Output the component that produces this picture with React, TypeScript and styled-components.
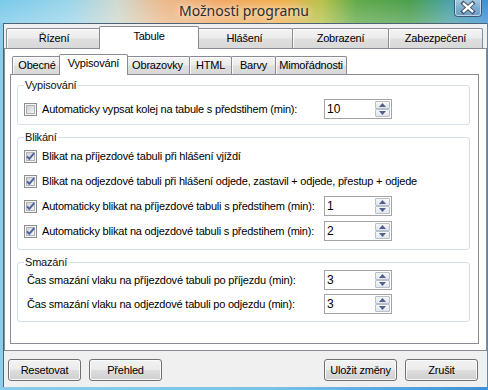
import React from 'react';
import styled, { createGlobalStyle, css } from 'styled-components';

const Global = createGlobalStyle`
  html, body { margin: 0; padding: 0; }
  body {
    width: 488px; height: 390px; overflow: hidden;
    font-family: "Liberation Sans", Arial, sans-serif;
  }
  * { box-sizing: border-box; }
`;

const Window = styled.div`
  width: 488px;
  height: 390px;
  display: flex;
  flex-direction: column;
  background: linear-gradient(to right, #8ccdea 0%, #7cc2e6 55%, #3f8fd6 100%);
`;

const TitleBar = styled.div`
  position: relative;
  flex: none;
  height: 23px;
  display: flex;
  align-items: center;
  justify-content: center;
  background:
    linear-gradient(to bottom, rgba(255,255,255,0) 0%, rgba(255,255,255,0.22) 100%),
    linear-gradient(to right, #79c9ea 0%, #9ad5ea 14%, #cfd9cf 24%, #ebbb8e 33%, #f1a963 45%, #f1b04e 58%, #b7c24c 66%, #62aa4a 73%, #4c9f4e 84%, #4aa2a6 92%, #3c8fd8 100%);
`;

const Title = styled.span`
  font-family: "Noto Sans", "Open Sans", sans-serif;
  font-size: 14px;
  line-height: 18px;
  margin-top: -1px;
  color: #2e2e2e;
  text-shadow: 0 0 6px rgba(255,255,255,0.85), 0 0 12px rgba(255,255,255,0.6);
`;

const CloseBox = styled.svg`
  position: absolute;
  top: 0;
  right: 6px;
`;

const Frame = styled.div`
  flex: 1;
  display: flex;
  padding: 0 1px 3px 3px;
`;

const Client = styled.div`
  flex: 1;
  display: flex;
  flex-direction: column;
  background: #f0f0f0;
  border-left: 1px solid #4e6378;
  border-top: 1px solid #4e6378;
`;

const TabStrip = styled.div<{ $h: number; $mt: number }>`
  position: relative;
  z-index: 1;
  display: flex;
  align-items: flex-end;
  height: ${p => p.$h}px;
  margin-top: ${p => p.$mt}px;
  padding-left: 2px;
  flex: none;
`;

const Tab = styled.div<{ $w: number; $h: number; $active?: boolean }>`
  width: ${p => (p.$active ? p.$w + 4 : p.$w)}px;
  height: ${p => (p.$active ? p.$h + 3 : p.$h)}px;
  margin-left: -1px;
  &:first-child { margin-left: 0; }
  border: 1px solid #898c95;
  border-bottom: none;
  border-radius: 2px 2px 0 0;
  display: flex;
  align-items: center;
  justify-content: center;
  font-size: 11px;
  letter-spacing: -0.2px;
  line-height: 13px;
  color: #000;
  white-space: nowrap;
  ${p =>
    p.$active
      ? css`
          margin-left: -3px;
          margin-right: -2px;
          margin-bottom: -1px;
          padding-bottom: 3px;
          z-index: 2;
          background: #fff;
        `
      : css`
          background: linear-gradient(#f4f4f4 0%, #ececec 45%, #dfdfdf 55%, #d8d8d8 100%);
          box-shadow: inset 1px 1px 0 rgba(255,255,255,0.8);
        `}
`;

const Panel = styled.div<{ $pad: string }>`
  flex: 1;
  display: flex;
  flex-direction: column;
  background: #fff;
  border: 1px solid #898c95;
  padding: ${p => p.$pad};
`;

const Group = styled.fieldset<{ $pt: number; $pb: number; $gap: number }>`
  margin: 0;
  min-inline-size: auto;
  border: 1px solid #d5dfe5;
  border-radius: 3px;
  padding: ${p => p.$pt}px 8px ${p => p.$pb}px 6px;
  display: flex;
  flex-direction: column;
  gap: ${p => p.$gap}px;
  & + & { margin-top: 6px; }
`;

const Legend = styled.legend`
  padding: 0 1px;
  font-size: 11px;
  line-height: 13px;
  letter-spacing: -0.2px;
  color: #111;
`;

const Row = styled.div`
  display: grid;
  grid-template-columns: 300px 68px;
  align-items: center;
  height: 20px;
`;

const CheckLine = styled.label`
  display: flex;
  align-items: center;
  gap: 5px;
  white-space: nowrap;
`;

const Text = styled.span<{ $indent?: number }>`
  font-size: 11px;
  line-height: 13px;
  letter-spacing: -0.2px;
  color: #000;
  white-space: nowrap;
  padding-left: ${p => p.$indent ?? 0}px;
`;

const CheckSvg = styled.svg`
  flex: none;
  display: block;
`;

const Spinner = styled.div`
  width: 68px;
  height: 20px;
  display: flex;
  align-items: stretch;
  border: 1px solid #a4a4a4;
  background: #fff;
  padding: 1px;
`;

const SpinValue = styled.span`
  flex: 1;
  font-size: 12px;
  line-height: 16px;
  padding-left: 1px;
  color: #000;
`;

const SpinButtons = styled.div`
  width: 15px;
  display: flex;
  flex-direction: column;
`;

const SpinBtn = styled.div`
  flex: 1;
  display: flex;
  align-items: center;
  justify-content: center;
  border: 1px solid #b8c0cb;
  border-radius: 1px;
  background: linear-gradient(#f6f7f8, #e2e5ea);
`;

const ButtonBar = styled.div`
  flex: none;
  height: 36px;
  display: flex;
  align-items: flex-start;
  padding: 8px 9px 0 4px;
`;

const ButtonGroup = styled.div`
  display: flex;
  gap: 8px;
  &:first-child { margin-right: auto; }
`;

const Button = styled.div`
  width: 73px;
  height: 22px;
  display: flex;
  align-items: center;
  justify-content: center;
  border: 1px solid #707070;
  border-radius: 3px;
  background: linear-gradient(#f2f2f2 0%, #ebebeb 48%, #dddddd 52%, #cfcfcf 100%);
  box-shadow: inset 0 0 0 1px rgba(252,252,252,0.9);
  font-size: 11px;
  letter-spacing: -0.2px;
  color: #000;
`;

const Check = ({ checked }: { checked: boolean }) => (
  <CheckSvg width="13" height="13" viewBox="0 0 13 13">
    <defs>
      <linearGradient id="cbg" x1="0" y1="0" x2="1" y2="1">
        <stop offset="0" stopColor="#cbced3" />
        <stop offset="1" stopColor="#f7f7f7" />
      </linearGradient>
    </defs>
    <rect x="0.5" y="0.5" width="12" height="12" fill="#f4f4f4" stroke="#8e8f8f" />
    <rect x="2.5" y="2.5" width="8" height="8" fill="url(#cbg)" stroke="#b0b4b9" />
    {checked && (
      <path d="M3 6.3 L5.3 8.9 L10.2 3.1" fill="none" stroke="#4b5f9f" strokeWidth="1.9" />
    )}
  </CheckSvg>
);

const Arrow = ({ up }: { up?: boolean }) => (
  <svg width="7" height="4" viewBox="0 0 7 4" style={{ display: 'block' }}>
    <path d={up ? 'M0 4 L3.5 0 L7 4Z' : 'M0 0 L7 0 L3.5 4Z'} fill="#4d6090" />
  </svg>
);

const NumBox = ({ value }: { value: string }) => (
  <Spinner>
    <SpinValue>{value}</SpinValue>
    <SpinButtons>
      <SpinBtn><Arrow up /></SpinBtn>
      <SpinBtn><Arrow /></SpinBtn>
    </SpinButtons>
  </Spinner>
);

const outerTabs = [
  { label: 'Řízení', w: 96 },
  { label: 'Tabule', w: 96, active: true },
  { label: 'Hlášení', w: 97 },
  { label: 'Zobrazení', w: 97 },
  { label: 'Zabezpečení', w: 95 },
];

const innerTabs = [
  { label: 'Obecné', w: 50 },
  { label: 'Vypisování', w: 65, active: true },
  { label: 'Obrazovky', w: 65 },
  { label: 'HTML', w: 43 },
  { label: 'Barvy', w: 45 },
  { label: 'Mimořádnosti', w: 72 },
];

export default function App() {
  return (
    <>
      <Global />
      <Window>
        <TitleBar>
          <Title>Možnosti programu</Title>
          <CloseBox width="28" height="17" viewBox="0 0 28 17">
            <defs>
              <linearGradient id="cls" x1="0" y1="0" x2="0" y2="1">
                <stop offset="0" stopColor="#c4d8ec" stopOpacity="0.75" />
                <stop offset="0.5" stopColor="#8eb0d2" stopOpacity="0.7" />
                <stop offset="1" stopColor="#6f98c4" stopOpacity="0.8" />
              </linearGradient>
            </defs>
            <path d="M0.5 0 V13.5 Q0.5 16.5 3.5 16.5 H24.5 Q27.5 16.5 27.5 13.5 V0" fill="url(#cls)" stroke="#3d5877" />
            <path d="M1.5 0 V13.3 Q1.5 15.5 3.7 15.5 H24.3 Q26.5 15.5 26.5 13.3 V0" fill="none" stroke="rgba(255,255,255,0.55)" />
            <path d="M9.5 3.5 L18.5 11.5 M18.5 3.5 L9.5 11.5" stroke="#3b4a5c" strokeWidth="4.2" strokeLinecap="square" />
            <path d="M9.8 3.8 L18.2 11.2 M18.2 3.8 L9.8 11.2" stroke="#ffffff" strokeWidth="2.4" strokeLinecap="square" />
          </CloseBox>
        </TitleBar>
        <Frame>
          <Client>
            <TabStrip $h={22} $mt={2}>
              {outerTabs.map(t => (
                <Tab key={t.label} $w={t.w} $h={20} $active={t.active}>{t.label}</Tab>
              ))}
            </TabStrip>
            <Panel $pad="5px 7px 6px 5px">
              <TabStrip $h={20} $mt={0}>
                {innerTabs.map(t => (
                  <Tab key={t.label} $w={t.w} $h={18} $active={t.active}>{t.label}</Tab>
                ))}
              </TabStrip>
              <Panel $pad="4px 8px 0 6px">
                <Group $pt={7} $pb={5} $gap={0}>
                  <Legend>Vypisování</Legend>
                  <Row>
                    <CheckLine>
                      <Check checked={false} />
                      <Text>Automaticky vypsat kolej na tabule s předstihem (min):</Text>
                    </CheckLine>
                    <NumBox value="10" />
                  </Row>
                </Group>
                <Group $pt={2} $pb={8} $gap={5}>
                  <Legend>Blikání</Legend>
                  <Row>
                    <CheckLine>
                      <Check checked />
                      <Text>Blikat na příjezdové tabuli při hlášení vjíždí</Text>
                    </CheckLine>
                  </Row>
                  <Row>
                    <CheckLine>
                      <Check checked />
                      <Text>Blikat na odjezdové tabuli při hlášení odjede, zastavil + odjede, přestup + odjede</Text>
                    </CheckLine>
                  </Row>
                  <Row>
                    <CheckLine>
                      <Check checked />
                      <Text>Automaticky blikat na příjezdové tabuli s předstihem (min):</Text>
                    </CheckLine>
                    <NumBox value="1" />
                  </Row>
                  <Row>
                    <CheckLine>
                      <Check checked />
                      <Text>Automaticky blikat na odjezdové tabuli s předstihem (min):</Text>
                    </CheckLine>
                    <NumBox value="2" />
                  </Row>
                </Group>
                <Group $pt={1} $pb={7} $gap={4}>
                  <Legend>Smazání</Legend>
                  <Row>
                    <Text $indent={3}>Čas smazání vlaku na příjezdové tabuli po příjezdu (min):</Text>
                    <NumBox value="3" />
                  </Row>
                  <Row>
                    <Text $indent={3}>Čas smazání vlaku na odjezdové tabuli po odjezdu (min):</Text>
                    <NumBox value="3" />
                  </Row>
                </Group>
              </Panel>
            </Panel>
            <ButtonBar>
              <ButtonGroup>
                <Button>Resetovat</Button>
                <Button>Přehled</Button>
              </ButtonGroup>
              <ButtonGroup>
                <Button>Uložit změny</Button>
                <Button>Zrušit</Button>
              </ButtonGroup>
            </ButtonBar>
          </Client>
        </Frame>
      </Window>
    </>
  );
}
